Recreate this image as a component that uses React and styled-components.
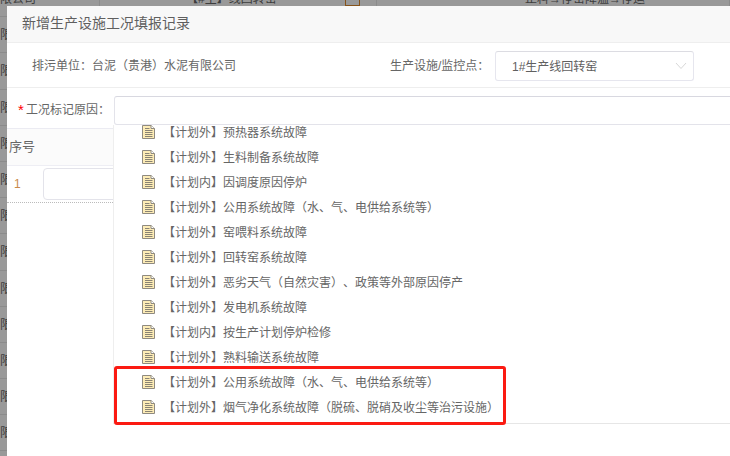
import React from 'react';
import styled, { createGlobalStyle } from 'styled-components';

const Global = createGlobalStyle`
  html, body {
    margin: 0;
    padding: 0;
    height: 100%;
    overflow: hidden;
    background: #fff;
  }
  body {
    font-family: "Liberation Sans", "Noto Sans CJK SC", sans-serif;
    font-size: 12px;
    color: #666;
    text-spacing-trim: space-all;
  }
  * { box-sizing: border-box; }
`;

const Page = styled.div`
  position: relative;
  width: 730px;
  height: 456px;
  overflow: hidden;
`;

const BackTable = styled.div`
  margin-top: -19px;
`;

const BackRow = styled.div`
  display: grid;
  grid-template-columns: 100px 277px 1fr;
  height: 36.2px;
  line-height: 36px;
  border-bottom: 1px solid #e8e8e8;
  white-space: nowrap;
`;

const BackCell = styled.div`
  position: relative;
  padding-left: ${({ $pad }) => $pad || 0}px;
  border-right: 1px solid #e8e8e8;
`;

const OrangeTag = styled.span`
  position: absolute;
  left: 245px;
  top: 10px;
  width: 15px;
  height: 15px;
  border: 1px solid #e08a2c;
`;

const Backdrop = styled.div`
  position: absolute;
  inset: 0;
  background: rgba(0, 0, 0, 0.4);
`;

const Modal = styled.div`
  position: absolute;
  left: 7px;
  top: 6px;
  width: 780px;
  height: 520px;
  background: #fff;
  border-radius: 3px 0 0 0;
`;

const ModalHeader = styled.div`
  height: 37px;
  padding-left: 15px;
  line-height: 35px;
  font-size: 14px;
  color: #5f5f5f;
  background: #f8f8f8;
  border-bottom: 1px solid #eee;
`;

const InfoRow = styled.div`
  display: flex;
  align-items: center;
  height: 45px;
  padding-left: 25px;
  border-bottom: 1px solid #eee;
`;

const UnitName = styled.span`
  width: 204px;
  margin-top: -2px;
`;

const FacilityLabel = styled.span`
  margin-left: 154px;
  margin-top: -2px;
  width: 105px;
`;

const SelectBox = styled.div`
  position: relative;
  width: 199px;
  height: 30px;
  margin-top: 2px;
  padding-left: 16px;
  line-height: 31px;
  border: 1px solid #e6e6ee;
  border-top-color: #dcdce2;
  border-radius: 3px;
  color: #606060;
`;

const Chevron = styled.svg`
  position: absolute;
  right: 6px;
  top: 10px;
  width: 12px;
  height: 8px;
`;

const ReasonRow = styled.div`
  position: relative;
  display: flex;
  align-items: center;
  height: 41px;
  padding: 0 0 0 11px;
  border-bottom: 1px solid #ebebf2;
`;

const Star = styled.span`
  width: 8px;
  margin-top: 3px;
  font-size: 15px;
  line-height: 12px;
  color: #f00;
`;

const ReasonLabel = styled.span`
  width: 88px;
`;

const ReasonInput = styled.div`
  flex: 1;
  height: 29px;
  margin-top: 4px;
  border: 1px solid #e3e3ea;
  border-top-color: #d8d8e0;
  border-radius: 3px;
  background: #fff;
`;

const Dropdown = styled.div`
  position: absolute;
  left: 106px;
  top: 37px;
  width: 680px;
  height: 299px;
  overflow: hidden;
  background: #fff;
  border-left: 1px solid #eee;
  border-bottom: 1px solid #e6e6e6;
  z-index: 2;
`;

const OptionList = styled.ul`
  list-style: none;
  margin: -6px 0 0;
  padding: 0;
`;

const Option = styled.li`
  display: flex;
  align-items: center;
  height: 25px;
  padding-left: 28px;
  white-space: nowrap;
  color: #666;
`;

const FileIcon = styled.svg`
  width: 13px;
  height: 14px;
  margin-right: 8px;
  flex: none;
`;

const TableHead = styled.div`
  height: 37px;
  padding-left: 2px;
  line-height: 36px;
  font-size: 13px;
  border-bottom: 1px solid #eeeef4;
  background: #fbfbfb;
`;

const TableRow = styled.div`
  display: flex;
  align-items: center;
  height: 37px;
  padding-left: 7px;
  border-bottom: 1px dotted #bbb;
`;

const RowNumber = styled.span`
  width: 29px;
  color: #c98a4a;
`;

const RowInput = styled.div`
  width: 90px;
  height: 32px;
  border: 1px solid #e3e3ea;
  border-radius: 4px;
`;

const Highlight = styled.div`
  position: absolute;
  left: 114px;
  top: 366px;
  width: 392px;
  height: 59px;
  border: 3px solid #fb1a12;
  border-radius: 3px;
  z-index: 3;
`;

const reasons = [
  '【计划外】预热器系统故障',
  '【计划外】生料制备系统故障',
  '【计划内】因调度原因停炉',
  '【计划外】公用系统故障（水、气、电供给系统等）',
  '【计划外】窑喂料系统故障',
  '【计划外】回转窑系统故障',
  '【计划外】恶劣天气（自然灾害）、政策等外部原因停产',
  '【计划外】发电机系统故障',
  '【计划内】按生产计划停炉检修',
  '【计划外】熟料输送系统故障',
  '【计划外】公用系统故障（水、气、电供给系统等）',
  '【计划外】烟气净化系统故障（脱硫、脱硝及收尘等治污设施）',
];

const backRows = Array.from({ length: 14 }, (_, i) => i);

const DocIcon = () => (
  <FileIcon viewBox="0 0 13 14">
    <path d="M0.5 0.5H9L12.5 3.5V13.5H0.5Z" fill="#fdecb6" stroke="#8f8a80" />
    <path d="M9 0.5V3.5H12.5" fill="#fff" stroke="#8f8a80" />
    <path d="M3 3.5H7.5M3 5.5H10.5M3 7.5H10.5M3 9.5H10.5M3 11.5H10.5" stroke="#8a8474" />
  </FileIcon>
);

const App = () => {
  return (
    <Page>
      <Global />
      <BackTable>
        {backRows.map((i) => (
          <BackRow key={i}>
            <BackCell>限公司</BackCell>
            <BackCell $pad={86}>
              {i === 0 ? '【#主】线回转窑' : ''}
              {i === 0 && <OrangeTag />}
            </BackCell>
            <BackCell $pad={148}>{i === 0 ? '止料→停窑降温→停运' : ''}</BackCell>
          </BackRow>
        ))}
      </BackTable>
      <Backdrop />
      <Modal>
        <ModalHeader>新增生产设施工况填报记录</ModalHeader>
        <InfoRow>
          <UnitName>排污单位：台泥（贵港）水泥有限公司</UnitName>
          <FacilityLabel>生产设施/监控点：</FacilityLabel>
          <SelectBox>
            1#生产线回转窑
            <Chevron viewBox="0 0 12 8">
              <path d="M1 1L6 6.5L11 1" fill="none" stroke="#d8d8d8" />
            </Chevron>
          </SelectBox>
        </InfoRow>
        <ReasonRow>
          <Star>*</Star>
          <ReasonLabel>工况标记原因：</ReasonLabel>
          <ReasonInput />
          <Dropdown>
            <OptionList>
              {reasons.map((r, i) => (
                <Option key={i}>
                  <DocIcon />
                  {r}
                </Option>
              ))}
            </OptionList>
          </Dropdown>
        </ReasonRow>
        <TableHead>序号</TableHead>
        <TableRow>
          <RowNumber>1</RowNumber>
          <RowInput />
        </TableRow>
      </Modal>
      <Highlight />
    </Page>
  );
};

export default App;
